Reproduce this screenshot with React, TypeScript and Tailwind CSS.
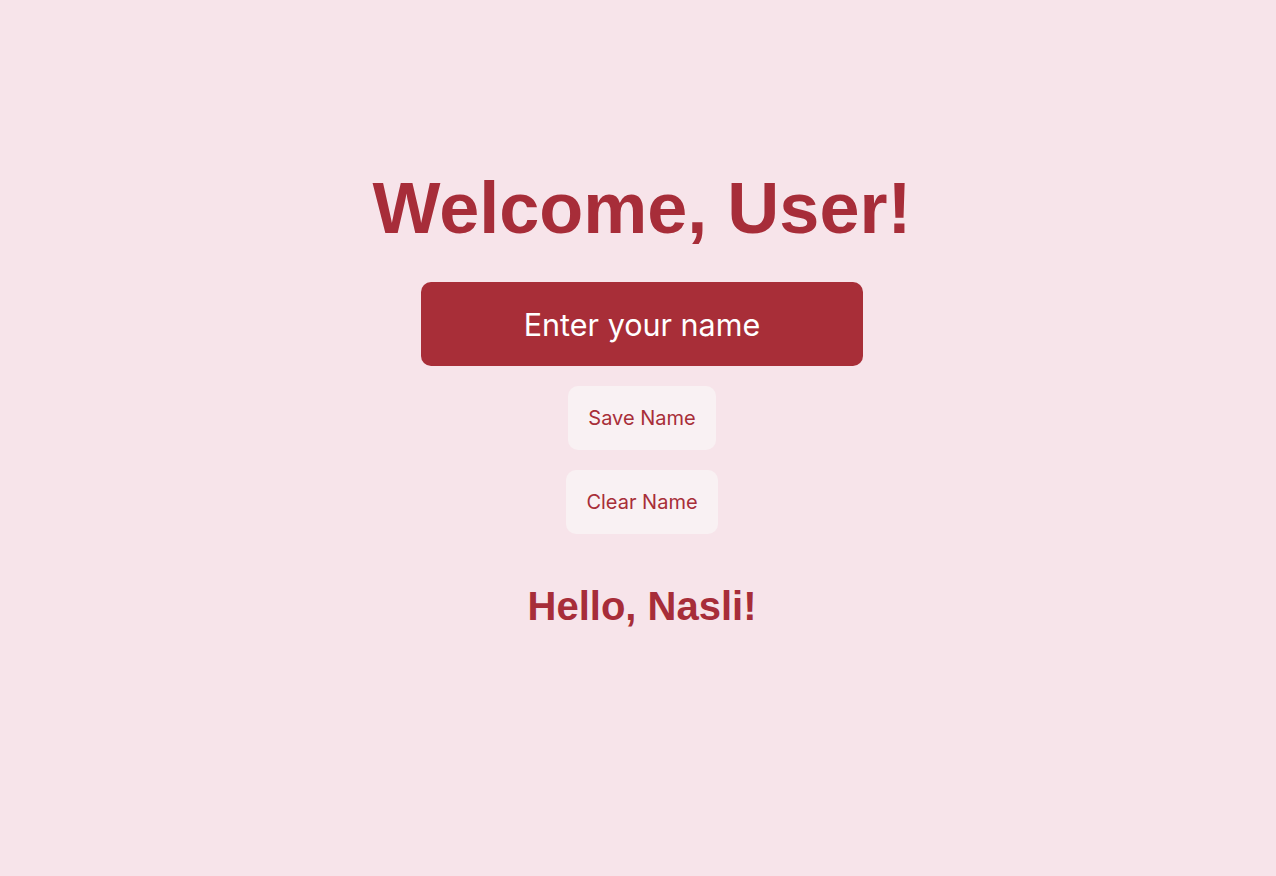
import React, { useState } from 'react';

const App: React.FC = () => {
  const [name, setName] = useState('');
  const [savedName, setSavedName] = useState('Nasli');

  return (
    <div className="min-h-screen bg-[#f7e4ea] flex flex-col items-center pt-[168px] pl-2">
      <h1 className="text-[72px] leading-[80px] font-bold text-[#a72d39] font-['Liberation_Sans',Arial,sans-serif]">
        Welcome, User!
      </h1>

      <input
        type="text"
        value={name}
        onChange={(e) => setName(e.target.value)}
        placeholder="Enter your name"
        className="mt-[34px] w-[442px] h-[84px] rounded-[10px] bg-[#a82e38] text-white placeholder:text-white text-center text-[30.5px] font-['Inter',sans-serif] outline-none"
      />

      <button
        onClick={() => setSavedName(name)}
        className="mt-5 h-16 px-5 rounded-[10px] bg-[#f9f1f3] text-[#a82e38] text-[20px] leading-6 font-['Inter',sans-serif]"
      >
        Save Name
      </button>

      <button
        onClick={() => setSavedName('')}
        className="mt-5 h-16 px-5 rounded-[10px] bg-[#f9f1f3] text-[#a82e38] text-[20px] leading-6 font-['Inter',sans-serif]"
      >
        Clear Name
      </button>

      <h2 className="mt-12 text-[40px] leading-[48px] font-bold text-[#a72d39] font-['Liberation_Sans',Arial,sans-serif]">
        Hello, {savedName}!
      </h2>
    </div>
  );
};

export default App;
